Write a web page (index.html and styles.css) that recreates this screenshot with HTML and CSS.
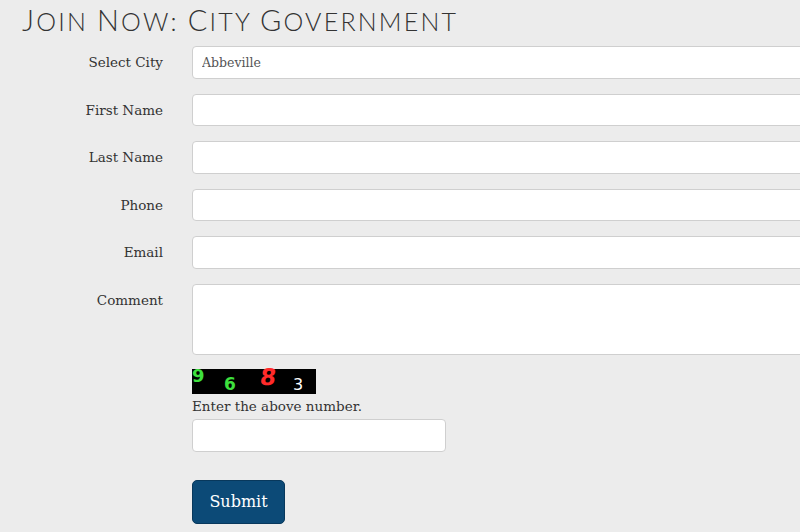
FILE: index.html
```html
<!DOCTYPE html>
<html>
<head>
<meta charset="utf-8">
<link rel="stylesheet" href="styles.css">
</head>
<body>
<div class="page">
  <h1 class="title"><span class="cap">J</span>oin <span class="cap">N</span>ow: <span class="cap">C</span>ity <span class="cap">G</span>overnment</h1>
  <form class="form">
    <div class="row">
      <label class="label">Select City</label>
      <select class="field select"><option>Abbeville</option></select>
    </div>
    <div class="row">
      <label class="label">First Name</label>
      <input class="field" type="text">
    </div>
    <div class="row">
      <label class="label">Last Name</label>
      <input class="field" type="text">
    </div>
    <div class="row">
      <label class="label">Phone</label>
      <input class="field" type="text">
    </div>
    <div class="row">
      <label class="label">Email</label>
      <input class="field" type="text">
    </div>
    <div class="row">
      <label class="label">Comment</label>
      <textarea class="field area"></textarea>
    </div>
    <div class="row captcha-row">
      <span class="label"></span>
      <div class="captcha-box">
        <div class="captcha">
          <span class="d d9">9</span>
          <span class="d d6">6</span>
          <span class="d d8">8</span>
          <span class="d d3">3</span>
        </div>
        <div class="hint">Enter the above number.</div>
        <input class="field small" type="text">
        <button class="submit" type="button">Submit</button>
      </div>
    </div>
  </form>
</div>
</body>
</html>
```
FILE: styles.css
```css
html, body {
  margin: 0;
  padding: 0;
  background: #ececec;
  overflow: hidden;
}
.page {
  width: 800px;
  height: 532px;
  overflow: hidden;
  padding-left: 22px;
  box-sizing: border-box;
}
.title {
  margin: 0;
  padding-top: 3px;
  height: 36px;
  font-family: "Lato", sans-serif;
  font-weight: 300;
  text-transform: uppercase;
  font-size: 25px;
  line-height: 36px;
  letter-spacing: 2.2px;
  color: #333;
  white-space: nowrap;
}
.cap {
  font-size: 29px;
  line-height: 1;
}
.form {
  margin-top: 7px;
  display: flex;
  flex-direction: column;
  gap: 15px;
}
.row {
  display: grid;
  grid-template-columns: 141px 640px;
  column-gap: 29px;
  align-items: start;
}
.label {
  text-align: right;
  font-family: "DejaVu Serif", serif;
  font-size: 13.5px;
  line-height: 32px;
  color: #333;
  white-space: nowrap;
}
.field {
  box-sizing: border-box;
  height: 32.5px;
  width: 640px;
  border: 1px solid #cfcfcf;
  border-radius: 4px;
  background: #fff;
  margin: 0;
  padding: 0 9px;
  font-family: "DejaVu Serif", serif;
  font-size: 12.5px;
  color: #555;
  outline: none;
}
.select {
  appearance: none;
  -webkit-appearance: none;
}
.area {
  height: 71px;
  resize: none;
}
.captcha-row {
  margin-top: -1px;
}
.captcha-box {
  display: flex;
  flex-direction: column;
  align-items: flex-start;
}
.captcha {
  position: relative;
  width: 124px;
  height: 25px;
  background: #000;
  font-family: "DejaVu Sans", sans-serif;
}
.d {
  position: absolute;
  font-weight: bold;
  line-height: 1;
}
.d9 { left: 0px; top: -2px; color: #3ee03e; font-size: 18px; }
.d6 { left: 32px; top: 7px; color: #3ee03e; font-size: 17px; }
.d8 { left: 68px; top: -3px; color: #ff2a2a; font-size: 23px; transform: skewX(-8deg); }
.d3 { left: 101px; top: 8px; color: #fff; font-size: 16px; font-weight: normal; }
.hint {
  margin-top: 2px;
  font-family: "DejaVu Serif", serif;
  font-size: 13.5px;
  line-height: 20px;
  color: #333;
}
.small {
  width: 254px;
  height: 33px;
  margin-top: 3px;
}
.submit {
  margin-top: 28px;
  width: 93px;
  height: 44px;
  border: 1px solid #08385c;
  border-radius: 5px;
  background: #0c4a77;
  color: #fff;
  font-family: "DejaVu Serif", serif;
  font-size: 16px;
  padding: 0;
}
```
